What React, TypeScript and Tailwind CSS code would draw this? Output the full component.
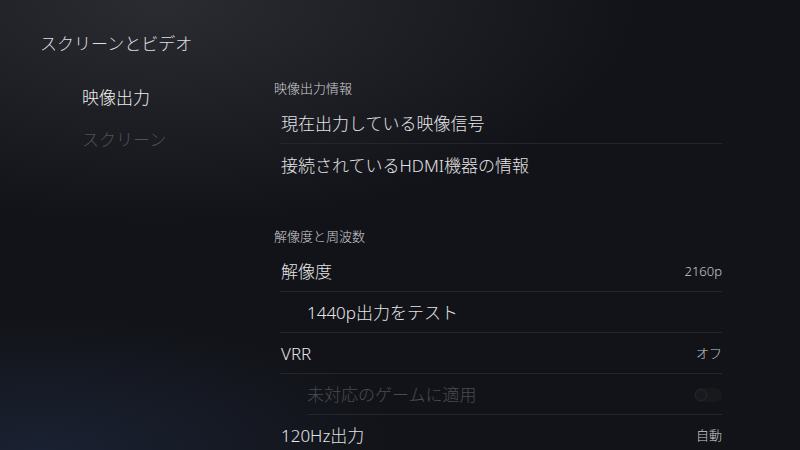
import React from 'react';

type Row = {
  label: string;
  value?: string;
  indent?: boolean;
  dim?: boolean;
  toggle?: boolean;
  last?: boolean;
};

const sections: { title: string; rows: Row[] }[] = [
  {
    title: '映像出力情報',
    rows: [
      { label: '現在出力している映像信号' },
      { label: '接続されているHDMI機器の情報', last: true },
    ],
  },
  {
    title: '解像度と周波数',
    rows: [
      { label: '解像度', value: '2160p' },
      { label: '1440p出力をテスト', indent: true },
      { label: 'VRR', value: 'オフ' },
      { label: '未対応のゲームに適用', indent: true, dim: true, toggle: true },
      { label: '120Hz出力', value: '自動' },
    ],
  },
];

const SettingRow = ({ row }: { row: Row }) => {
  const text = (
    <>
      <span className={row.dim ? 'text-[#484b51]' : 'text-[#e4e4e6]'}>{row.label}</span>
      {row.value && <span className="text-[13px] text-[#c9cacd]">{row.value}</span>}
      {row.toggle && (
        <span className="flex h-[14px] w-[28px] items-center rounded-full bg-[#17191d] px-[1px]">
          <span className="h-[12px] w-[12px] rounded-full border border-[#26282d]" />
        </span>
      )}
    </>
  );

  if (row.dim) {
    // indented divider
    return (
      <div className="ml-[33px] flex h-[41px] items-center justify-between border-b border-[#24262b] pt-[2px] text-[17px]">
        {text}
      </div>
    );
  }

  return (
    <div
      className={`ml-[6px] flex h-[41px] items-center justify-between pt-[2px] text-[17px] ${
        row.last ? '' : 'border-b border-[#24262b]'
      } ${row.indent ? 'pl-[27px]' : 'pl-[1px]'}`}
    >
      {text}
    </div>
  );
};

export default function App() {
  return (
    <div
      className="h-[450px] w-[800px] overflow-hidden bg-[#121318] bg-[radial-gradient(ellipse_60%_50%_at_20%_0%,#2b2c31_0%,transparent_100%),radial-gradient(ellipse_45%_30%_at_5%_100%,#1a2132_0%,transparent_100%)] font-light text-white"
      style={{ fontFamily: '"Noto Sans", "Noto Sans CJK JP", sans-serif' }}
    >
      <div className="flex h-[76px] items-start pl-[40px] pt-[31px] text-[17px] leading-[26px] text-[#dedfe1]">
        スクリーンとビデオ
      </div>

      <div className="flex">
        <nav className="flex w-[274px] flex-col pl-[82px]">
          <div className="flex h-[42px] items-center pt-[2px] text-[17px] text-[#eeeeef]">映像出力</div>
          <div className="flex h-[42px] items-center pt-[2px] text-[17px] text-[#4f5257]">スクリーン</div>
        </nav>

        <div className="flex w-[448px] flex-col">
          {sections.map((s, i) => (
            <div key={s.title} className={i > 0 ? 'mt-[39px]' : ''}>
              <div className="mb-[3px] flex h-[24px] items-center pt-[1px] text-[13px] text-[#cfd0d3]">{s.title}</div>
              {s.rows.map((r) => (
                <SettingRow key={r.label} row={r} />
              ))}
            </div>
          ))}
        </div>
      </div>
    </div>
  );
}
